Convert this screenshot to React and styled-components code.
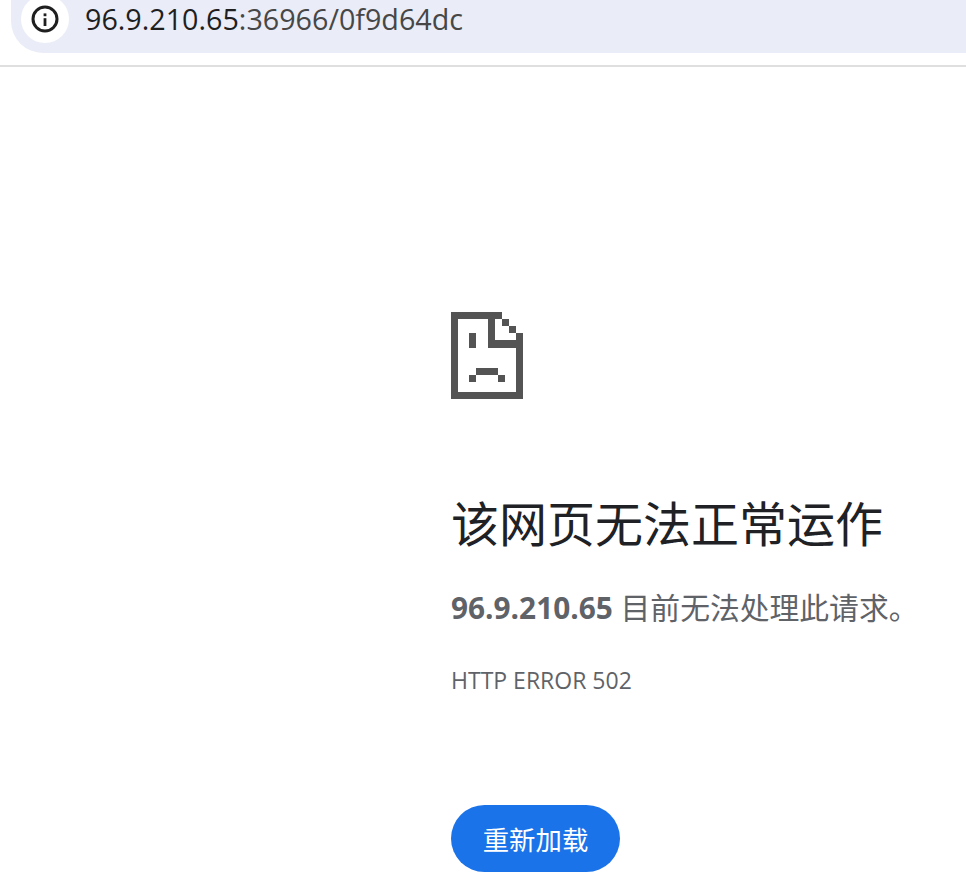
import React from 'react';
import styled, { createGlobalStyle } from 'styled-components';

const fontStack = `"Open Sans", "Noto Sans", "Noto Sans CJK SC", sans-serif`;

const GlobalStyle = createGlobalStyle`
  html, body {
    margin: 0;
    padding: 0;
    background: #fff;
    overflow: hidden;
  }
  body {
    font-family: ${fontStack};
  }
`;

const Page = styled.div`
  width: 966px;
  height: 892px;
  overflow: hidden;
`;

const BrowserBar = styled.header`
  height: 65px;
  border-bottom: 2px solid #dfdfdf;
  padding-left: 11px;
`;

const Omnibox = styled.div`
  height: 53px;
  display: flex;
  align-items: center;
  padding-left: 10px;
  background: #eaedf7;
  border-radius: 0 0 0 32px;
`;

const SiteInfoButton = styled.div`
  width: 48px;
  height: 48px;
  margin-top: -15px;
  flex: none;
  border-radius: 50%;
  background: #fff;
  display: flex;
  align-items: center;
  justify-content: center;
`;

const UrlText = styled.div`
  margin-left: 16px;
  margin-top: -15px;
  font-size: 28.7px;
  line-height: 30px;
  color: #474747;
  white-space: nowrap;
`;

const UrlHost = styled.span`
  color: #1f1f1f;
`;

const Main = styled.main`
  padding: 245px 0 0 451px;
`;

const SadIcon = styled.svg`
  display: block;
  width: 72px;
  height: 87px;
`;

const Title = styled.h1`
  margin: 96px 0 0;
  font-size: 48px;
  line-height: 58px;
  font-weight: 400;
  color: #202124;
  white-space: nowrap;
`;

const Message = styled.p`
  margin: 35px 0 0;
  font-size: 29.8px;
  line-height: 40px;
  color: #5f6368;
  white-space: nowrap;
`;

const ErrorCode = styled.div`
  margin-top: 37px;
  font-size: 23px;
  line-height: 30px;
  color: #5f6368;
`;

const ReloadButton = styled.button`
  display: block;
  margin-top: 110px;
  width: 169px;
  height: 67px;
  padding: 0;
  border: none;
  border-radius: 34px;
  background: #1a73e8;
  color: #fff;
  font-family: ${fontStack};
  font-size: 26.4px;
  cursor: pointer;
`;

function InfoIcon() {
  return (
    <svg width="28" height="28" viewBox="0 0 28 28" aria-hidden="true">
      <circle cx="14" cy="14" r="12" fill="none" stroke="#1f1f1f" strokeWidth="3" />
      <rect x="12.6" y="8.4" width="2.8" height="2.8" fill="#1f1f1f" />
      <rect x="12.6" y="13.2" width="2.8" height="7.8" fill="#1f1f1f" />
    </svg>
  );
}

function SadPageIcon() {
  return (
    <SadIcon viewBox="0 0 72 87" shapeRendering="crispEdges" aria-hidden="true">
      <path
        fill="#545454"
        d="M0 0H51V7H44V28H65V21H72V87H0ZM7 7V80H65V36H37V7ZM51 7H58V14H51ZM58 14H65V21H58ZM18 21H25V36H18ZM25 56H47V63H25ZM18 63H25V70H18ZM47 63H54V70H47Z"
        fillRule="evenodd"
      />
    </SadIcon>
  );
}

export default function App() {
  return (
    <Page>
      <GlobalStyle />
      <BrowserBar>
        <Omnibox>
          <SiteInfoButton>
            <InfoIcon />
          </SiteInfoButton>
          <UrlText>
            <UrlHost>96.9.210.65</UrlHost>:36966/0f9d64dc
          </UrlText>
        </Omnibox>
      </BrowserBar>
      <Main>
        <SadPageIcon />
        <Title>该网页无法正常运作</Title>
        <Message>
          <strong>96.9.210.65</strong> 目前无法处理此请求。
        </Message>
        <ErrorCode>HTTP ERROR 502</ErrorCode>
        <ReloadButton>重新加载</ReloadButton>
      </Main>
    </Page>
  );
}
